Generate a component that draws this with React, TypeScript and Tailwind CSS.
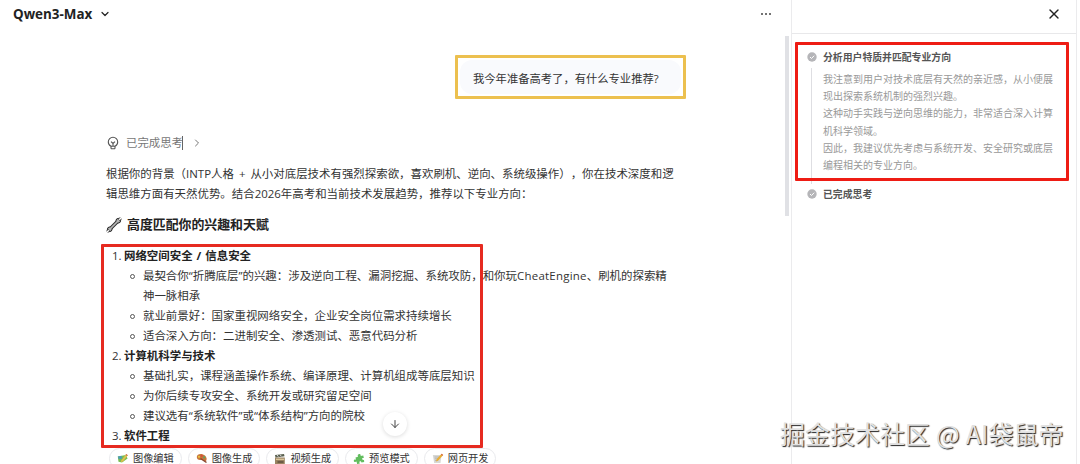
import React from "react";
import { ChevronDown, ChevronRight, ArrowDown, X } from "lucide-react";

interface Section {
  title: string;
  items: React.ReactNode[];
}

const sections: Section[] = [
  {
    title: "网络空间安全 / 信息安全",
    items: [
      <>
        最契合你“折腾底层”的兴趣：涉及逆向工程、漏洞挖掘、系统攻防，和你玩
        <span className="tracking-[0.25px]">CheatEngine</span>
        、刷机的探索精神一脉相承
      </>,
      "就业前景好：国家重视网络安全，企业安全岗位需求持续增长",
      "适合深入方向：二进制安全、渗透测试、恶意代码分析",
    ],
  },
  {
    title: "计算机科学与技术",
    items: [
      "基础扎实，课程涵盖操作系统、编译原理、计算机组成等底层知识",
      "为你后续专攻安全、系统开发或研究留足空间",
      "建议选有“系统软件”或“体系结构”方向的院校",
    ],
  },
  { title: "软件工程", items: [] },
];

const thoughts = [
  "我注意到用户对技术底层有天然的亲近感，从小便展现出探索系统机制的强烈兴趣。",
  "这种动手实践与逆向思维的能力，非常适合深入计算机科学领域。",
  "因此，我建议优先考虑与系统开发、安全研究或底层编程相关的专业方向。",
];

const BulbIcon = () => (
  <svg width="12" height="14" viewBox="0 0 12 14" fill="none" stroke="#555" strokeWidth="1.1">
    <path d="M4 10.2C2.200 9.300 1.300 7.600 1.300 5.900a4.700 4.700 0 0 1 9.400 0c0 1.700-.9 3.400-2.700 4.300v1.800a.8.8 0 0 1-.8.8H4.800a.8.8 0 0 1-.8-.8z" />
    <path d="M4 10.300h4M6 10V7.500M4 5.600 6 7.500l2-1.900" />
  </svg>
);

const WrenchIcon = () => (
  <svg width="16" height="16" viewBox="0 0 16 16">
    <g stroke="#2b2b2b" fill="#2b2b2b">
      <circle cx="12.300" cy="3.700" r="2.300" />
      <circle cx="3.700" cy="12.300" r="2.300" />
      <path d="M12 4 4 12" strokeWidth="3.600" />
    </g>
    <g stroke="#b8b8b8" fill="#b8b8b8">
      <circle cx="12.300" cy="3.700" r="1.300" />
      <circle cx="3.700" cy="12.300" r="1.300" />
      <path d="M12 4 4 12" strokeWidth="1.700" />
    </g>
    <path d="m13 3 2-2M3 13l-2 2" stroke="#2b2b2b" strokeWidth="2.600" />
    <path d="m13.200 2.800 2.800-2.800M2.800 13.200 0 16" stroke="#fff" strokeWidth="1.400" />
  </svg>
);

const CheckIcon = () => (
  <svg width="10" height="10" viewBox="0 0 10 10" className="shrink-0">
    <circle cx="5" cy="5" r="4.700" fill="#b5b5b8" />
    <path d="m3 5 1.500 1.500L7.200 3.700" fill="none" stroke="#fff" strokeWidth="1" />
  </svg>
);

const EditIcon = () => (
  <svg width="12" height="11" viewBox="0 0 12 11">
    <path d="m.8 3.500 8-1.500 1.800 3.500-5.600 4-3.500-.7z" fill="#79bd50" />
    <path d="m.8 3.500 3.600-.7 1 2.600-3.600.8z" fill="#4d9db4" />
    <path d="m4.200 7.500 5-6.500 1.600 1.200L6 8.500 3.800 9z" fill="#dfc04c" />
    <path d="m9.200 1 1.600 1.200-.8.900-1.400-1.300z" fill="#ca6557" />
  </svg>
);

const PaletteIcon = () => (
  <svg width="12" height="11" viewBox="0 0 12 11">
    <path d="M.8 4C.8 1.500 4 .4 7 1.500s4.400 4 3.300 6c-.9 1.500-2.300.8-2.800-.3-.5-1-1.500-.4-2.500-.3C2.600 7.500.8 6 .8 4" fill="#c7763b" />
    <circle cx="3" cy="3.800" r="1.100" fill="#e8c33e" />
    <circle cx="5.700" cy="2.800" r="1.100" fill="#d94b3d" />
    <circle cx="8.200" cy="4.300" r="1.100" fill="#55a768" />
    <path d="m4.500 5.500 6 4" stroke="#8a4630" strokeWidth="1.500" />
  </svg>
);

const ClapperIcon = () => (
  <svg width="12" height="12" viewBox="0 0 12 12">
    <path d="M1 4.500h9.800V11H1z" fill="#9a8361" />
    <path d="M1 2 10 1l.5 2.200L1.500 4.500z" fill="#59604f" />
    <path d="m3 2 1.300 1.600M6 1.700l1.300 1.500" stroke="#ddd" strokeWidth="1" />
    <path d="M2 6.300h8" stroke="#ddc99f" strokeWidth="1.300" />
    <path d="M3.500 9h6" stroke="#55483a" strokeWidth="1.300" />
  </svg>
);

const PuzzleIcon = () => (
  <svg width="12" height="12" viewBox="0 0 12 12" fill="#62bd5e">
    <path d="M2.500 4.500 5 3.700C4.300 2.300 5 1 6.300.9c1.200 0 1.700 1 1.300 2.100l2.700-.6.5 2.600c-1.400-.1-1.900.4-1.700 1.100.2.800.9 1 1.900.6l.2 2.300-2.700.6c-.4-1.300-1-1.600-1.700-1.200-.7.300-.7 1 .1 2l-2.700.7-.7-2.500C2.300 9.300 1 9 .8 7.900c-.1-1 .8-1.600 2.200-1.200z" />
  </svg>
);

const MemoIcon = () => (
  <svg width="12" height="11" viewBox="0 0 12 11">
    <path d="M.8 2h8.700l-1 8H2.200z" fill="#d8d8d4" />
    <path d="M2.500 4h5M2.700 5.800h4M3 7.600h3" stroke="#9a9fa3" strokeWidth=".6" />
    <path d="m4 8.500.7-2.500L9.600.8 11.200 2 6.300 7.500z" fill="#e9ae36" />
    <path d="m9.600.8 1.600 1.200-.8.800-1.500-1.200z" fill="#cf6251" />
  </svg>
);

const chips = [
  { label: "图像编辑", icon: <EditIcon /> },
  { label: "图像生成", icon: <PaletteIcon /> },
  { label: "视频生成", icon: <ClapperIcon /> },
  { label: "预览模式", icon: <PuzzleIcon /> },
  { label: "网页开发", icon: <MemoIcon /> },
];

const ChatPanel: React.FC = () => (
  <main className="relative flex w-[791px] shrink-0 flex-col">
    <header className="flex h-[28px] shrink-0 items-center justify-between pr-[20px] pl-[13px]">
      <button className="flex items-center gap-[7px] text-[13.4px] font-bold text-[#222]">
        Qwen3-Max
        <ChevronDown size={12} strokeWidth={2.4} />
      </button>
      <button className="flex gap-[2px]" aria-label="More">
        <span className="size-[2px] rounded-full bg-[#444]" />
        <span className="size-[2px] rounded-full bg-[#444]" />
        <span className="size-[2px] rounded-full bg-[#444]" />
      </button>
    </header>

    <div className="h-[418px] shrink-0 overflow-hidden pt-[27px] pr-[105px] pl-[106px]">
      <div className="flex justify-end">
        <div className="h-[44px] w-[231px] rounded-[1px] border-[3px] border-[#ecc04f] p-[2px]">
          <div className="flex h-full items-center rounded-xl bg-[#f9fafd] pt-[4px] pl-[13px] text-[11.3px] text-[#333]">
            我今年准备高考了，有什么专业推荐?
          </div>
        </div>
      </div>

      <div className="mt-[34px] flex h-[20px] items-center text-[11.4px] text-[#777]">
        <span className="mr-[7px] ml-[1px]">
          <BulbIcon />
        </span>
        已完成思考
        <span className="-ml-px h-[14px] w-px bg-[#666]" />
        <ChevronRight size={12} className="ml-[8px]" />
      </div>

      <p className="mt-[11px] -mr-3 w-[574px] text-[11.45px] leading-[20px] whitespace-nowrap text-[#333] [text-spacing-trim:space-all] [word-spacing:2px]">
        根据你的背景（INTP人格 + 从小对底层技术有强烈探索欲，喜欢刷机、逆向、系统级操作），你在技术深度和逻
        <br />
        辑思维方面有天然优势。结合2026年高考和当前技术发展趋势，推荐以下专业方向：
      </p>

      <h3 className="mt-[11px] flex h-[20px] items-center gap-[5px] text-[12.9px] font-bold text-[#222]">
        <WrenchIcon />
        高度匹配你的兴趣和天赋
      </h3>

      <ol className="mt-[11px] pl-[6px] text-[11.45px] leading-[20px] text-[#333]">
        {sections.map((section, i) => (
          <li key={section.title}>
            <div className="flex h-[20px]">
              <span className="w-[12px] shrink-0">{i + 1}.</span>
              <span className="font-bold text-[#222] [word-spacing:1px]">{section.title}</span>
            </div>
            <ul>
              {section.items.map((item, j) => (
                <li key={j} className="flex">
                  <span className="mt-[8px] mr-[8px] ml-[18px] size-[5px] shrink-0 rounded-full border border-[#555]" />
                  <span className="w-[528px]">{item}</span>
                </li>
              ))}
            </ul>
          </li>
        ))}
      </ol>
    </div>

    <footer className="flex gap-[6px] pt-[2px] pl-[109px]">
      {chips.map((chip) => (
        <button
          key={chip.label}
          className="flex h-[21px] w-[72.700px] shrink-0 items-center gap-[4px] rounded-full border border-[#e9eaed] pl-[7px] text-[10.2px] text-[#333]"
        >
          {chip.icon}
          {chip.label}
        </button>
      ))}
    </footer>

    {/* Scroll to bottom */}
    <button
      className="absolute top-[412px] left-[383px] flex size-[24px] items-center justify-center rounded-full bg-white text-[#444] shadow-[0_1px_4px_rgba(0,0,0,0.14)]"
      aria-label="Scroll down"
    >
      <ArrowDown size={12} />
    </button>
    {/* Scrollbar thumb */}
    <div className="absolute top-[36px] left-[785px] h-[180px] w-[4px] bg-[#e0e1e5]" />
    {/* Highlight frame */}
    <div className="pointer-events-none absolute top-[244px] left-[101px] h-[204px] w-[382px] rounded-[1px] border-[3px] border-[#e62a20]" />
  </main>
);

const ThinkingPanel: React.FC = () => (
  <aside className="relative w-[286px] shrink-0 border-x border-[#ebebed]">
    <div className="flex h-[34px] items-center justify-end border-b border-[#e8e8ea] pr-[14px] pb-[5px] text-[#222]">
      <X size={16} strokeWidth={2} />
    </div>
    <div className="pt-[14px] pl-[15px]">
      <div className="flex h-[18px] items-center gap-[6px] text-[9.85px] font-bold text-[#555]">
        <CheckIcon />
        分析用户特质并匹配专业方向
      </div>
      <div className="mt-[2px] ml-[4px] h-[116px] border-l border-[#dedee2] pt-[3px] pl-[11px] text-[10px] leading-[17.200px] text-[#999]">
        {thoughts.map((line) => (
          <p key={line} className="w-[232px]">
            {line}
          </p>
        ))}
      </div>
      <div className="mt-[1px] flex h-[18px] items-center gap-[6px] text-[9.85px] font-bold text-[#555]">
        <CheckIcon />
        已完成思考
      </div>
    </div>
    <div className="pointer-events-none absolute top-[42px] left-[3px] h-[139px] w-[274px] rounded-[1px] border-[3px] border-[#ee1c14]" />
  </aside>
);

export default function App() {
  return (
    <div className="relative flex h-[464px] w-[1080px] overflow-hidden bg-white font-['Open_Sans','Noto_Sans_CJK_SC',sans-serif]">
      <ChatPanel />
      <ThinkingPanel />
      <div className="absolute top-[416px] left-[780px] font-['Noto_Sans_CJK_SC',sans-serif] text-[25px] leading-[34px] whitespace-nowrap text-[#e0e0e0] [text-shadow:1px_1px_1px_#222] [word-spacing:0.5px]">
        掘金技术社区 @ AI袋鼠帝
      </div>
    </div>
  );
}
